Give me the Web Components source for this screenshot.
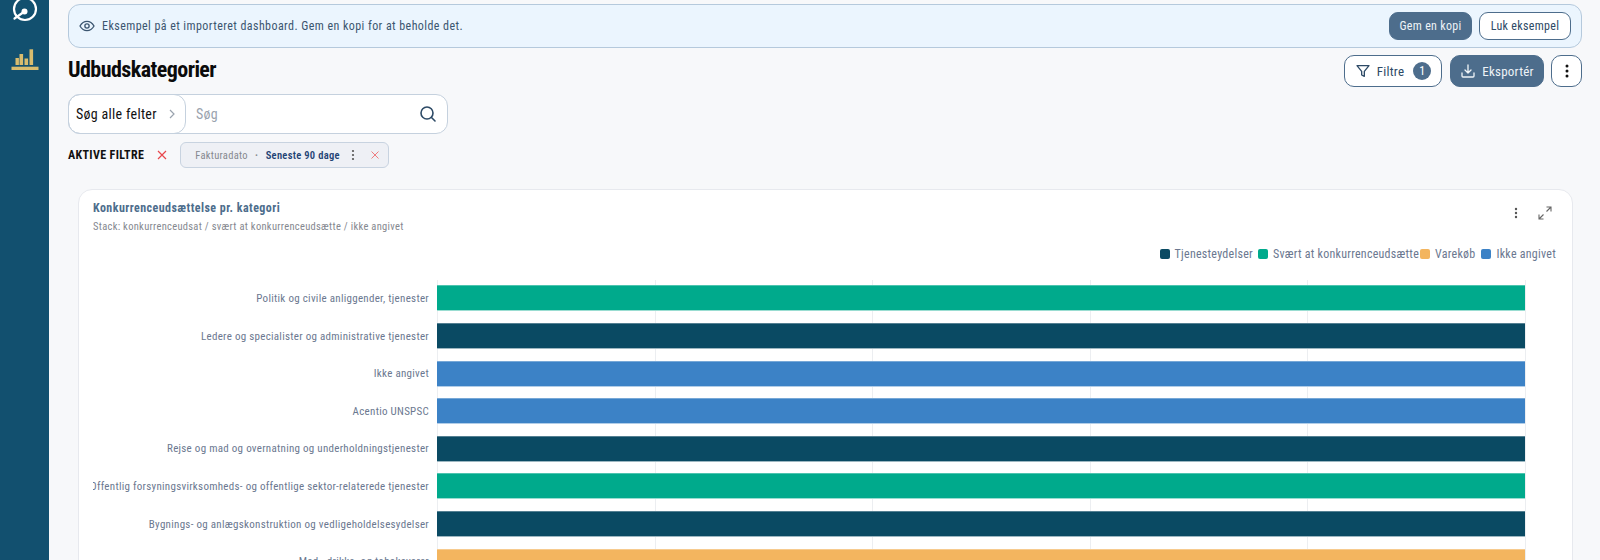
<!DOCTYPE html>
<html lang="da">
<head>
<meta charset="utf-8">
<title>Udbudskategorier</title>
<style>
  html, body { margin: 0; height: 100%; overflow: hidden; background: #f7f8fa; }
  body { font-family: "Roboto", "Liberation Sans", sans-serif; font-stretch: 75%; }
</style>
</head>
<body>
<app-shell>
  <side-nav slot="nav"></side-nav>
  <notice-banner>Eksempel på et importeret dashboard. Gem en kopi for at beholde det.</notice-banner>
  <page-header>Udbudskategorier</page-header>
  <search-bar></search-bar>
  <active-filters></active-filters>
  <chart-card></chart-card>
</app-shell>
<script>
class AppShell extends HTMLElement {
  connectedCallback() {
    this.attachShadow({ mode: 'open' });
    this.shadowRoot.innerHTML = `
      <style>
        :host { display: flex; height: 560px; overflow: hidden; font-stretch: 75%; }
        main { flex: 1; min-width: 0; padding: 4px 18px 0 19px; }
      </style>
      <slot name="nav"></slot>
      <main><slot></slot></main>
    `;
  }
}
customElements.define('app-shell', AppShell);

class SideNav extends HTMLElement {
  connectedCallback() {
    this.attachShadow({ mode: 'open' });
    this.shadowRoot.innerHTML = `
      <style>
        :host { display: flex; flex-direction: column; align-items: center; width: 49px; flex: none; background: #12506f; }
        svg { display: block; }
        .bars { margin-top: 25px; }
      </style>
      <svg width="30" height="24" viewBox="0 0 30 24" fill="none" stroke="#fff" stroke-width="2.2" stroke-linecap="round">
        <circle cx="15" cy="9" r="11"/>
        <circle cx="14.500" cy="11.500" r="3" fill="#fff" stroke="none"/>
        <path d="M14.500 11.500 L4.500 18.500"/>
      </svg>
      <svg class="bars" width="28" height="22" viewBox="0 0 28 22" fill="#d9bc6e">
        <rect x="0.500" y="17.700" width="27" height="3.300"/>
        <rect x="4.500" y="9" width="3.400" height="7"/>
        <rect x="8.500" y="5" width="3.600" height="11"/>
        <rect x="13.500" y="9.500" width="3.600" height="6.500"/>
        <rect x="18.500" y="0.300" width="3.600" height="15.700"/>
      </svg>
    `;
  }
}
customElements.define('side-nav', SideNav);

class AppButton extends HTMLElement {
  connectedCallback() {
    this.attachShadow({ mode: 'open' });
    this.shadowRoot.innerHTML = `
      <style>
        :host { display: inline-flex; align-items: center; justify-content: center; box-sizing: border-box; height: 28px; border-radius: 9px; border: 1px solid #4d6d8c; background: #fff; color: #2d4a66; font-size: 12px; letter-spacing: .3px; white-space: nowrap; }
        :host([primary]) { background: #4d6d8c; color: #eef3f7; }
        :host([big]) { height: 32px; border-radius: 10px; font-size: 13px; letter-spacing: .25px; }
      </style>
      <slot></slot>
    `;
  }
}
customElements.define('app-button', AppButton);

class NoticeBanner extends HTMLElement {
  connectedCallback() {
    this.attachShadow({ mode: 'open' });
    this.shadowRoot.innerHTML = `
      <style>
        :host { display: flex; align-items: center; gap: 7px; box-sizing: border-box; height: 44px; padding: 0 10px; border: 1px solid #b5c9dc; border-radius: 12px; background: #ebf5fe; color: #3b5570; font-size: 12px; letter-spacing: .43px; }
        .text { flex: 1; }
        .actions { display: flex; gap: 7px; }
        svg { flex: none; }
      </style>
      <svg width="16" height="16" viewBox="0 0 24 24" fill="none" stroke="#3b5570" stroke-width="2"><path d="M1.500 12S5.500 5 12 5s10.500 7 10.500 7-4 7-10.500 7S1.500 12 1.500 12z"/><circle cx="12" cy="12" r="3.200"/></svg>
      <span class="text"><slot></slot></span>
      <div class="actions">
        <app-button primary style="width:83px">Gem en kopi</app-button>
        <app-button style="width:92px">Luk eksempel</app-button>
      </div>
    `;
  }
}
customElements.define('notice-banner', NoticeBanner);

class PageHeader extends HTMLElement {
  connectedCallback() {
    this.attachShadow({ mode: 'open' });
    this.shadowRoot.innerHTML = `
      <style>
        :host { display: flex; align-items: center; justify-content: space-between; margin-top: 7px; height: 32px; }
        h1 { margin: 0 0 4px; font-size: 22px; font-weight: 700; letter-spacing: -.55px; color: #0b0b0b; }
        .actions { display: flex; gap: 8px; }
        .count { display: inline-flex; align-items: center; justify-content: center; width: 18px; height: 18px; margin-left: 9px; border-radius: 50%; background: #4d6d8c; color: #fff; font-size: 12px; }
        svg { display: block; flex: none; margin-right: 6px; }
        .more { margin-left: -1px; }
        .more svg { margin: 0; }
      </style>
      <h1><slot></slot></h1>
      <div class="actions">
        <app-button big style="width:98px">
          <svg width="16" height="16" viewBox="0 0 24 24" fill="none" stroke="#2d4a66" stroke-width="2" stroke-linejoin="round"><path d="M3 4h18l-7 8.500V20l-4-2v-5.500z"/></svg>
          <span>Filtre</span><span class="count">1</span>
        </app-button>
        <app-button big primary style="width:94px">
          <svg width="16" height="16" viewBox="0 0 24 24" fill="none" stroke="#eef3f7" stroke-width="2" stroke-linecap="round" stroke-linejoin="round"><path d="M12 3v12M7.500 10.500 12 15l4.500-4.500M3 15v4.500a1.500 1.500 0 0 0 1.500 1.500h15a1.500 1.500 0 0 0 1.500-1.500V15"/></svg>
          <span>Eksportér</span>
        </app-button>
        <app-button big class="more" style="width:31px">
          <svg width="16" height="16" viewBox="0 0 16 16" fill="#111"><circle cx="8" cy="3" r="1.500"/><circle cx="8" cy="8" r="1.500"/><circle cx="8" cy="13" r="1.500"/></svg>
        </app-button>
      </div>
    `;
  }
}
customElements.define('page-header', PageHeader);

class SearchBar extends HTMLElement {
  connectedCallback() {
    this.attachShadow({ mode: 'open' });
    this.shadowRoot.innerHTML = `
      <style>
        :host { display: flex; box-sizing: border-box; width: 380px; height: 40px; margin-top: 7px; border: 1px solid #c5d1de; border-radius: 12px; background: #fff; font-size: 14px; letter-spacing: .3px; }
        .field { display: flex; align-items: center; gap: 10px; box-sizing: border-box; width: 118px; margin: -1px 0 -1px -1px; padding: 0 7px; border: 1px solid #c5d1de; border-radius: 12px; color: #111; white-space: nowrap; }
        .input { flex: 1; display: flex; align-items: center; justify-content: space-between; padding: 0 10px 0 10px; color: #9aa3ae; }
      </style>
      <div class="field"><span>Søg alle felter</span>
        <svg width="10" height="10" viewBox="0 0 10 10" fill="none" stroke="#9aa3ae" stroke-width="1.200"><path d="M3 1l4 4-4 4"/></svg>
      </div>
      <div class="input"><span>Søg</span>
        <svg width="18" height="18" viewBox="0 0 18 18" fill="none" stroke="#2d4a66" stroke-width="1.600" stroke-linecap="round"><circle cx="8" cy="8" r="6"/><path d="M12.500 12.500 16 16"/></svg>
      </div>
    `;
  }
}
customElements.define('search-bar', SearchBar);

class ActiveFilters extends HTMLElement {
  connectedCallback() {
    this.attachShadow({ mode: 'open' });
    this.shadowRoot.innerHTML = `
      <style>
        :host { display: flex; align-items: center; margin-top: 8px; height: 26px; }
        .label { font-size: 12px; font-weight: 700; letter-spacing: .35px; color: #111; }
        .clear { margin: 0 13px 0 13px; display: block; }
        .chip { display: flex; align-items: center; box-sizing: border-box; height: 26px; padding: 0 9px 0 14px; border: 1px solid #c8d3e0; border-radius: 6px; background: #eef0f5; font-size: 10.500px; letter-spacing: .3px; color: #85888f; white-space: nowrap; }
        .dot { margin: 0 7.500px 0 7px; font-weight: 700; }
        b { color: #1e4374; font-weight: 600; }
        .more { margin: 0 15px 0 10px; display: block; }
      </style>
      <span class="label">AKTIVE FILTRE</span>
      <svg class="clear" width="10" height="10" viewBox="0 0 10 10" stroke="#e8474c" stroke-width="1.200"><path d="M1 1l8 8M9 1l-8 8"/></svg>
      <div class="chip">
        <span>Fakturadato</span><span class="dot">·</span><b>Seneste 90 dage</b>
        <svg class="more" width="6" height="12" viewBox="0 0 6 12" fill="#555"><circle cx="3" cy="2" r="1.100"/><circle cx="3" cy="6" r="1.100"/><circle cx="3" cy="10" r="1.100"/></svg>
        <svg width="8" height="8" viewBox="0 0 8 8" stroke="#ee7c80" stroke-width="1"><path d="M.5.500l7 7M7.500.500l-7 7"/></svg>
      </div>
    `;
  }
}
customElements.define('active-filters', ActiveFilters);

class BarRow extends HTMLElement {
  connectedCallback() {
    const color = this.getAttribute('color');
    this.attachShadow({ mode: 'open' });
    this.shadowRoot.innerHTML = `
      <style>
        :host { display: grid; grid-template-columns: 344px 1089px; height: 37.600px; }
        .label { display: flex; justify-content: flex-end; align-items: center; overflow: hidden; white-space: nowrap; padding-right: 8px; color: #6b7890; font-size: 11px; letter-spacing: .28px; }
        .plot { display: flex; align-items: center; background: repeating-linear-gradient(90deg, #eceef1 0 1px, transparent 1px 217.600px); }
        .bar { box-sizing: border-box; width: 1088px; height: 26px; background: ${color}; border-top: 1px solid color-mix(in srgb, ${color} 70%, #fff); border-bottom: 1px solid color-mix(in srgb, ${color} 40%, #fff); }
      </style>
      <div class="label"><slot></slot></div>
      <div class="plot"><div class="bar"></div></div>
    `;
  }
}
customElements.define('bar-row', BarRow);

class ChartCard extends HTMLElement {
  connectedCallback() {
    const rows = [
      ['#00aa8c', 'Politik og civile anliggender, tjenester'],
      ['#0a4a63', 'Ledere og specialister og administrative tjenester'],
      ['#3c82c6', 'Ikke angivet'],
      ['#3c82c6', 'Acentio UNSPSC'],
      ['#0a4a63', 'Rejse og mad og overnatning og underholdningstjenester'],
      ['#00aa8c', 'Offentlig forsyningsvirksomheds- og offentlige sektor-relaterede tjenester'],
      ['#0a4a63', 'Bygnings- og anlægskonstruktion og vedligeholdelsesydelser'],
      ['#f3b55f', 'Mad-, drikke- og tobaksvarer']
    ];
    const legend = [['#0a4a63', 'Tjenesteydelser'], ['#00aa8c', 'Svært at konkurrenceudsætte'], ['#f3b55f', 'Varekøb'], ['#3c82c6', 'Ikke angivet']];
    this.attachShadow({ mode: 'open' });
    this.shadowRoot.innerHTML = `
      <style>
        :host { display: block; box-sizing: border-box; margin: 21px 9px 0 10px; height: 600px; padding: 9px 16px 0 14px; border: 1px solid #e7e9ee; border-radius: 14px; background: #fff; }
        .head { display: flex; justify-content: space-between; align-items: flex-start; }
        h2 { margin: 0; font-size: 12px; font-weight: 700; letter-spacing: .45px; color: #4d6d8c; line-height: 18px; }
        p { margin: 3px 0 0; font-size: 10.500px; letter-spacing: .3px; color: #85888f; line-height: 14px; }
        .tools { display: flex; align-items: center; gap: 20px; padding: 7px 4px 0 0; }
        .legend { display: flex; justify-content: flex-end; margin-top: 11px; height: 18px; font-size: 12px; letter-spacing: .25px; color: #6b7890; }
        .item { display: flex; align-items: center; gap: 5px; white-space: nowrap; }
        .item + .item { margin-left: 5px; }
        .item:nth-child(3) { margin-left: 1px; }
        .item:nth-child(4) { margin-left: 6px; }
        .item i { display: block; width: 10px; height: 10px; border-radius: 2px; }
        .chart { margin-top: 16.700px; }
      </style>
      <div class="head">
        <div><h2>Konkurrenceudsættelse pr. kategori</h2><p>Stack: konkurrenceudsat / svært at konkurrenceudsætte / ikke angivet</p></div>
        <div class="tools">
          <svg width="4" height="12" viewBox="0 0 4 12" fill="#555"><circle cx="2" cy="2" r="1.200"/><circle cx="2" cy="6" r="1.200"/><circle cx="2" cy="10" r="1.200"/></svg>
          <svg width="14" height="14" viewBox="0 0 14 14" fill="none" stroke="#666" stroke-width="1.100"><path d="M8.500 1h4.500v4.500M13 1 8.500 5.500M5.500 13H1V8.500M1 13l4.500-4.500"/></svg>
        </div>
      </div>
      <div class="legend">
        ${legend.map(l => `<span class="item"><i style="background:${l[0]}"></i>${l[1]}</span>`).join('')}
      </div>
      <div class="chart">
        ${rows.map(r => `<bar-row color="${r[0]}">${r[1]}</bar-row>`).join('')}
      </div>
    `;
  }
}
customElements.define('chart-card', ChartCard);
</script>
</body>
</html>
